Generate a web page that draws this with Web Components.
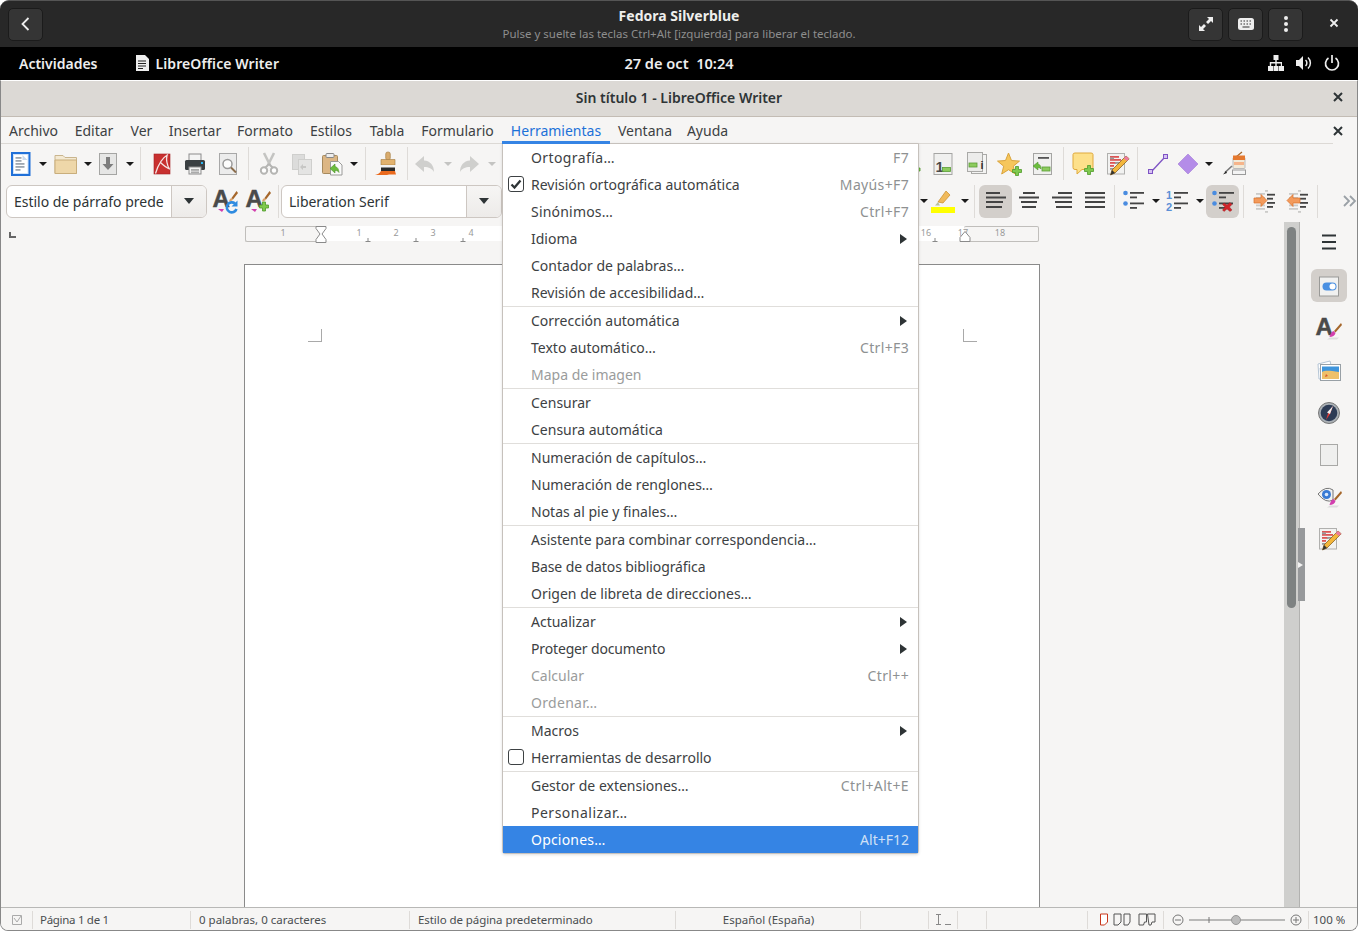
<!DOCTYPE html>
<html lang="es"><head><meta charset="utf-8"><title>Fedora Silverblue</title>
<style>
html,body{margin:0;padding:0;background:#fff}
body{width:1358px;height:931px;overflow:hidden;position:relative;font-family:"Noto Sans","Open Sans",sans-serif;font-size:14px;color:#2e3436}
</style></head><body>
<vm-header></vm-header>
<gnome-panel></gnome-panel>
<lo-window>
  <lo-titlebar>Sin título 1 - LibreOffice Writer</lo-titlebar>
  <lo-menubar>
    <lo-mi w="65">Archivo</lo-mi><lo-mi w="56">Editar</lo-mi><lo-mi w="39">Ver</lo-mi><lo-mi w="68">Insertar</lo-mi><lo-mi w="72">Formato</lo-mi><lo-mi w="60">Estilos</lo-mi><lo-mi w="52">Tabla</lo-mi><lo-mi w="89">Formulario</lo-mi><lo-mi w="108" open>Herramientas</lo-mi><lo-mi w="70">Ventana</lo-mi><lo-mi w="55">Ayuda</lo-mi>
  </lo-menubar>
  <lo-toolbar h="39" pad="4.5">
    <lo-tool i="doc"></lo-tool><lo-drop></lo-drop><lo-tool i="folder" style="margin-left:1px"></lo-tool><lo-drop></lo-drop><lo-tool i="save" style="margin-left:-2px"></lo-tool><lo-drop></lo-drop><lo-sep w="10"></lo-sep>
    <lo-tool i="pdf"></lo-tool><lo-tool i="print"></lo-tool><lo-tool i="preview"></lo-tool><lo-sep w="8"></lo-sep>
    <lo-tool i="cut"></lo-tool><lo-tool i="copy"></lo-tool><lo-tool i="paste" style="margin-left:-3px"></lo-tool><lo-drop></lo-drop><lo-sep w="12"></lo-sep>
    <lo-tool i="brush"></lo-tool><lo-sep w="5"></lo-sep>
    <lo-tool i="undo"></lo-tool><lo-drop dim></lo-drop><lo-tool i="redo"></lo-tool><lo-drop dim></lo-drop>
    <lo-gap w="397"></lo-gap>
    <lo-tool i="hdr"></lo-tool><lo-tool i="one"></lo-tool><lo-tool i="info"></lo-tool><lo-tool i="star"></lo-tool><lo-tool i="xref"></lo-tool><lo-sep w="7"></lo-sep>
    <lo-tool i="note" w="34"></lo-tool><lo-tool i="track"></lo-tool><lo-sep w="8"></lo-sep>
    <lo-tool i="line"></lo-tool><lo-tool i="diamond" w="29"></lo-tool><lo-drop></lo-drop><lo-tool i="bucket" w="37" style="margin-left:2px"></lo-tool>
  </lo-toolbar>
  <lo-toolbar h="39" pad="6" style="padding-bottom:3px;box-sizing:border-box">
    <lo-combo w="201" arrow="35">Estilo de párrafo prede</lo-combo>
    <lo-tool i="styleup" style="margin-left:2px"></lo-tool><lo-tool i="stylenew"></lo-tool><lo-sep w="6"></lo-sep>
    <lo-combo w="221" arrow="35">Liberation Serif</lo-combo>
    <lo-gap w="417"></lo-gap>
    <lo-drop w="10"></lo-drop><lo-tool i="hl" style="margin-left:-3px"></lo-tool><lo-drop></lo-drop><lo-sep w="9"></lo-sep>
    <lo-tool i="al" active></lo-tool><lo-tool i="ac"></lo-tool><lo-tool i="ar"></lo-tool><lo-tool i="aj"></lo-tool><lo-sep w="6"></lo-sep>
    <lo-tool i="bul"></lo-tool><lo-drop></lo-drop><lo-tool i="num"></lo-tool><lo-drop></lo-drop><lo-tool i="nolist" active style="margin-left:1px"></lo-tool><lo-sep w="9"></lo-sep>
    <lo-tool i="indent"></lo-tool><lo-tool i="outdent"></lo-tool><lo-sep w="6"></lo-sep>
    <lo-tool i="more" w="29" style="margin-left:14px"></lo-tool>
  </lo-toolbar>
  <lo-workspace>
    <lo-editor>
      <lo-ruler></lo-ruler>
      <lo-page></lo-page>
    </lo-editor>
    <lo-scroll></lo-scroll>
    <lo-sidebar>
      <lo-tool i="burger" w="36" h="34"></lo-tool>
      <lo-tool i="props" w="36" h="33" active style="margin-top:10px"></lo-tool>
      <lo-tool i="sstyle" w="36" h="42" style="margin-top:6px"></lo-tool>
      <lo-tool i="gallery" w="36" h="42"></lo-tool>
      <lo-tool i="compass" w="36" h="42"></lo-tool>
      <lo-tool i="pageb" w="36" h="42"></lo-tool>
      <lo-tool i="eye" w="36" h="42"></lo-tool>
      <lo-tool i="track" w="36" h="42"></lo-tool>
    </lo-sidebar>
  </lo-workspace>
  <lo-statusbar></lo-statusbar>
</lo-window>
<lo-popup>
  <lo-item k="F7" style="letter-spacing:.4px">Ortografía…</lo-item>
  <lo-item k="Mayús+F7" check="on">Revisión ortográfica automática</lo-item>
  <lo-item k="Ctrl+F7" style="letter-spacing:.2px">Sinónimos…</lo-item>
  <lo-item sub>Idioma</lo-item>
  <lo-item>Contador de palabras…</lo-item>
  <lo-item>Revisión de accesibilidad…</lo-item>
  <hr-line></hr-line>
  <lo-item sub>Corrección automática</lo-item>
  <lo-item k="Ctrl+F3">Texto automático…</lo-item>
  <lo-item off>Mapa de imagen</lo-item>
  <hr-line></hr-line>
  <lo-item>Censurar</lo-item>
  <lo-item>Censura automática</lo-item>
  <hr-line></hr-line>
  <lo-item>Numeración de capítulos…</lo-item>
  <lo-item>Numeración de renglones…</lo-item>
  <lo-item>Notas al pie y finales…</lo-item>
  <hr-line></hr-line>
  <lo-item>Asistente para combinar correspondencia…</lo-item>
  <lo-item style="letter-spacing:-.1px">Base de datos bibliográfica</lo-item>
  <lo-item>Origen de libreta de direcciones…</lo-item>
  <hr-line></hr-line>
  <lo-item sub>Actualizar</lo-item>
  <lo-item sub style="letter-spacing:-.15px">Proteger documento</lo-item>
  <lo-item off k="Ctrl++">Calcular</lo-item>
  <lo-item off style="letter-spacing:.3px">Ordenar…</lo-item>
  <hr-line></hr-line>
  <lo-item sub>Macros</lo-item>
  <lo-item check="off">Herramientas de desarrollo</lo-item>
  <hr-line></hr-line>
  <lo-item k="Ctrl+Alt+E">Gestor de extensiones…</lo-item>
  <lo-item style="letter-spacing:.5px">Personalizar…</lo-item>
  <lo-item k="Alt+F12" hot style="letter-spacing:.2px">Opciones…</lo-item>
</lo-popup>
<script>
const A='font-family="Liberation Sans" font-weight="700"';
const bigA=`<text x="-1.500" y="18" ${A} font-size="24" fill="#4a4a4a" stroke="#4a4a4a" stroke-width=".5">A</text>`;
const lines=(a,c='#444',h=1.8)=>a.map(([x,y,w])=>`<rect x="${x}" y="${y}" width="${w}" height="${h}" fill="${c}"/>`).join('');
const plus=(x,y)=>`<path transform="translate(${x} ${y})" d="M3 0h3v3h3v3H6v3H3V6H0V3h3z" fill="#7fc94e" stroke="#4f9a2a" stroke-width=".8"/>`;
const minus=(x,y)=>`<rect x="${x}" y="${y}" width="8" height="4" fill="#8ccb5e" stroke="#5a9d36" stroke-width=".8"/>`;
const brushS=`<path d="M22.500 2l-5 7 1.500 1.500L24 4z" fill="#a5662a"/><path d="M17.500 9c-1.500.5-2 1.500-2.500 3.500 2-.2 3.500-.8 4-2z" fill="#d9a26a"/>`;
const brushL=`<path d="M24 6l-7 8 1.500 1.500L25 8z" fill="#a5662a"/><path d="M16.500 14c-2 .5-3 3-4 6 3 0 5.500-1.500 6-4z" fill="#d23fae"/><path d="M10 22.500h10l2-2H13z" fill="#ddd"/>`;
const I={
doc:`<rect x="3" y="1" width="17.500" height="22" fill="#cfe2f8" stroke="#2070d8" stroke-width="2"/><rect x="5" y="3" width="13.500" height="18" fill="#fff"/><path d="M13.500 3l5 5h-5z" fill="#c9d9ec"/>${lines([[6.500,5,6],[6.500,8,6],[6.500,11,9],[6.500,14,9],[6.500,17,5]],'#9fa7b0')}`,
folder:`<path d="M1 3.500h8l2 2h11.500v16H1z" fill="#f4e9d2" stroke="#c9b58e"/><path d="M1 8h21.500v13.500H1z" fill="#eed7a9" stroke="#c9ae7c"/>`,
save:`<rect x="3.500" y="1.500" width="17" height="21" fill="#e6e6e5" stroke="#a5a5a3"/><path d="M10 5h4v7h3.500L12 18l-5.500-6H10z" fill="#7d7d7d"/>`,
pdf:`<rect x="4" y="2" width="16" height="20" fill="#c8302f" stroke="#a52022" stroke-width=".6"/><path d="M18 2.500C12 6 8 13 5.500 21.500M10 10c3 3 6 6 10 7M17 3c-1 5 0 10 2.500 14" fill="none" stroke="#f5e3e3" stroke-width="1.300"/>`,
print:`<rect x="6" y="2" width="12" height="7" fill="#f4f4f4" stroke="#8b8b8b"/><rect x="2" y="8" width="20" height="10" rx="1.500" fill="#3a3f42"/><rect x="6" y="15" width="12" height="7" fill="#f2f2f2" stroke="#8b8b8b"/><rect x="18" y="10" width="2" height="2" fill="#2bb5f0"/>${lines([[8,17,8],[8,19.500,8]],'#aaa')}`,
preview:`<rect x="3.500" y="1.500" width="17" height="21" fill="#ececec" stroke="#a8a8a8"/><circle cx="11.500" cy="12" r="4.500" fill="#fdfdfd" stroke="#9a9a9a" stroke-width="1.500"/><path d="M15 15.500l5 5" stroke="#8b6d4c" stroke-width="2"/>`,
cut:`<path d="M7 1l6 12M17 1l-6 12" stroke="#c4c4c2" stroke-width="2.600" fill="none"/><circle cx="7" cy="18.500" r="3.200" fill="#fff" stroke="#b5b5b3" stroke-width="2"/><circle cx="17" cy="18.500" r="3.200" fill="#fff" stroke="#b5b5b3" stroke-width="2"/><path d="M12 12l-4 4M12 12l4 4" stroke="#b5b5b3" stroke-width="2"/>`,
copy:`<rect x="2.500" y="2.500" width="12" height="15" fill="#dcdcdb" stroke="#cfcfcd"/><rect x="8.500" y="7.500" width="13" height="15" fill="#e4e4e3" stroke="#cfcfcd"/><path d="M13 12l-3 3 3 3v-2h3v-2h-3z" fill="#c7c7c5"/>`,
paste:`<rect x="2.500" y="3.500" width="15" height="18" rx="1" fill="#dcb684" stroke="#a68a5e"/><rect x="6" y="1.500" width="8" height="4" rx="1" fill="#eee" stroke="#888"/><path d="M10.500 9.500h8l3.500 3.500v10H10.500z" fill="#fafafa" stroke="#9a9a98"/><path d="M15 12l-5 4.500 5 4.500v-2.500c2 0 3 .5 4 2-.3-3.500-1.500-5.500-4-6z" fill="#6cbd3e" stroke="#4b8f28" stroke-width=".6"/>`,
brush:`<rect x="9.700" y="0" width="4.600" height="8" rx="2" fill="#d9ab6c" stroke="#a27b40" stroke-width=".6"/><path d="M5 7.500h14V13H5z" fill="#e2b26e" stroke="#a27b40" stroke-width=".6"/><rect x="5" y="13" width="14" height="3" fill="#f2f2f2"/><rect x="5" y="15.500" width="14" height="3.500" fill="#2a2a2a"/><path d="M5 19h14l1 3.500H13l-2 .5H-1c2-.8 5-1.500 6-4z" fill="#ea6a1e"/>`,
undo:`<path d="M11 4L2 12l9 8v-5c5 0 8 1.500 10 5 0-6.500-3.500-11-10-11.500z" fill="#cfcfcd" transform="translate(-1 0)"/>`,
redo:`<path d="M13 4l9 8-9 8v-5C8 15 5 16.500 3 20 3 13.500 6.500 9 13 8.500z" fill="#cfcfcd" transform="translate(-1 0)"/>`,
hdr:`<g transform="translate(-14 0)"><circle cx="28" cy="7" r="3" fill="none" stroke="#bbb"/>${plus(26,13)}</g>`,
one:`<g transform="translate(-1.500 0)"><rect x="3.500" y="1.500" width="18" height="21" fill="#f0f0ef" stroke="#a5a5a3"/><text x="5" y="20" ${A} font-size="15" fill="#4a4a4a">1</text>${minus(12,15.500)}</g>`,
info:`<g transform="translate(-1 0)"><rect x="7.500" y="2.500" width="15" height="19" fill="#f4f4f3" stroke="#a9a9a7"/><rect x="3.500" y=".5" width="15" height="19" fill="#ececeb" stroke="#a9a9a7"/>${minus(5,11)}<text x="16.500" y="17" ${A} font-size="11" fill="#333">i</text></g>`,
star:`<path d="M10.500 1l3 7.500 8 .6-6.200 5.100 2 7.800-6.800-4.300L3.700 22l2-7.800L-.5 9.100l8-.6z" fill="#f6c65b" stroke="#d9a33c"/>${plus(14.500,14.500)}`,
xref:`<g transform="translate(-1 0)"><rect x="3.500" y="1.500" width="18" height="21" fill="#f0f0ef" stroke="#a5a5a3"/>${lines([[8,5,11]],'#555')}${minus(12,15)}<path d="M8 10l-5 4 5 4v-2.500c1 0 2 .5 3 1.500 0-3-1-4.500-3-5z" fill="#6cbd3e" stroke="#4b8f28" stroke-width=".5"/></g>`,
note:`<g transform="translate(-1 0)"><path d="M2 2.500Q2 1 4 1h16q2 0 2 1.500v13q0 2-2 2H11L6 22v-4.500H4q-2 0-2-2z" fill="#fde08a" stroke="#e0a93c"/>${plus(13.500,13.500)}</g>`,
track:`<rect x="2.500" y="1.500" width="17" height="20.500" fill="#f2f2f1" stroke="#b0b0ae"/>${lines([[5,4,9],[5,7,11],[5,10,6],[5,13,4]],'#d55')}${lines([[5,5.500,4],[10,10,7],[5,16,5]],'#999')}<path d="M21 4l3.200 2.800L10 21 5.500 23 7 18z" fill="#f3b63c" stroke="#7a5518" stroke-width=".7"/><path d="M21 4l3.200 2.800-2.400 2.300-3.200-2.800z" fill="#ec7aa0"/><path d="M5.500 23L7 18l3 3z" fill="#333"/>`,
line:`<path d="M5 20L19 5" stroke="#7d52c4" stroke-width="1.300"/><rect x="2.500" y="17.500" width="4" height="4" fill="#d6c2f2" stroke="#7d52c4"/><rect x="17.500" y="2.500" width="4" height="4" fill="#d6c2f2" stroke="#7d52c4"/>`,
diamond:`<path d="M11 2l10 10-10 10L1 12z" fill="#b48ce8" stroke="#a27ad6" stroke-width=".6"/>`,
bucket:`<path d="M19 0l-6 5" stroke="#a5662a" stroke-width="1.200"/><rect x="10" y="5.500" width="12" height="11" rx="1" fill="#f2ead9" stroke="#bbb"/><path d="M10 3.500h12V8H10z" fill="#e5792f"/><rect x="11" y="10" width="10" height="3" fill="#f6b48a"/><rect x="9.500" y="18" width="13" height="4.500" fill="#f4f4f4" stroke="#9a9a9a"/><path d="M9 14L2 20.500" stroke="#777" stroke-width="1.600"/><path d="M3 19l-3 3.500 4-1.500z" fill="#222"/>`,
styleup:`${bigA}${brushS}<path d="M21 14.500a5 5 0 1 0 1.500 5.500" fill="none" stroke="#2f8be0" stroke-width="2.600"/><path d="M23.500 11.500v6h-6z" fill="#2f8be0"/><path d="M4 20l6 0-2 3z" fill="#d23fae"/>`,
stylenew:`${bigA}${brushS}<path d="M4 20l6 0-2 3z" fill="#d23fae"/>${plus(12.500,13)}`,
hl:`<path d="M15 2l4 4-7 8-5-1z" fill="#f0ba5c" stroke="#c98b28" stroke-width=".7"/><path d="M7 13l-3 3.500h5z" fill="#b8c2a0"/><rect x="0" y="18" width="24" height="6" fill="#ffff00"/>`,
al:lines([[2,3,14],[2,7.500,20],[2,12,17],[2,17,16]],'#444',2),
ac:lines([[6,3,12],[2,7.500,20],[4,12,16],[5,17,14]],'#444',2),
ar:lines([[8,3,14],[2,7.500,20],[5,12,17],[6,17,16]],'#444',2),
aj:lines([[2,3,20],[2,7.500,20],[2,12,20],[2,17,20]],'#444',2),
bul:`<circle cx="3.500" cy="4" r="2.300" fill="#4a8ce0"/><circle cx="3.500" cy="14.500" r="2.300" fill="#4a8ce0"/>${lines([[8,3,14],[8,7.500,7],[8,13.500,14],[8,18,7]],'#444')}`,
num:`<text x="0" y="10" ${A} font-size="11" fill="#5a8fd6">1</text><text x="0" y="22" ${A} font-size="11" fill="#5a8fd6">2</text>${lines([[8,3,14],[8,7.500,7],[8,13.500,14],[8,18,7]],'#444')}`,
nolist:`<circle cx="3.500" cy="4" r="2.300" fill="#4a8ce0"/><circle cx="3.500" cy="14.500" r="2.300" fill="#4a8ce0"/>${lines([[8,3,15],[8,7.500,7],[8,13.500,14],[8,18,7]],'#444')}<path d="M13 14l3 2 3-2.500 2 2-2.500 2.500 2.500 3-2 1.500-3-2.500-3 2.500-1.500-1.500 2.500-3-2.500-2.500z" fill="#d0242a" stroke="#9a1a1e" stroke-width=".4"/>`,
indent:`${lines([[12,1,3],[3,4,9],[3,8,9],[3,15.500,9],[3,19,9],[12,22,3]],'#cbcbc9')}${lines([[14,4.800,8],[14,8.800,6],[14,13,8],[14,17,6]],'#444')}<path d="M1 9h7V5.500l6 6-6 6V14H1z" fill="#f39a5b" stroke="#d9702a" stroke-width=".7"/>`,
outdent:`${lines([[12,1,3],[3,4,9],[3,8,9],[3,15.500,9],[3,19,9],[12,22,3]],'#cbcbc9')}${lines([[14,4.800,8],[14,8.800,6],[14,13,8],[14,17,6]],'#444')}<path d="M14 9H7V5.500l-6 6 6 6V14h7z" fill="#f39a5b" stroke="#d9702a" stroke-width=".7"/>`,
more:`<path d="M7 7l5 5-5 5M13 7l5 5-5 5" fill="none" stroke="#9aa0a6" stroke-width="1.800"/>`,
burger:`<path d="M5 5.500h14M5 12h14M5 18.500h14" stroke="#2e3436" stroke-width="2"/>`,
props:`<rect x="2.500" y="3" width="19" height="19" fill="#f1f1f0" stroke="#9a9a98"/><rect x="5.500" y="8.500" width="14" height="8" rx="4" fill="#4a90e2"/><circle cx="15.500" cy="12.500" r="3" fill="#fff"/>`,
sstyle:`${bigA}${brushL}`,
gallery:`<path d="M1 5l12-3 1 4-11 3 1 11H2z" fill="#fff" stroke="#b5c5d5"/><rect x="3.500" y="5.500" width="20" height="16" fill="#fff" stroke="#98a0a6"/><rect x="5" y="7.500" width="17" height="6" fill="#3f95dc"/><path d="M5 13c4-2 8-1 17 0v7H5z" fill="#eec06a"/><path d="M9 15l2 2-3 1z" fill="#d95a2a"/>`,
compass:`<circle cx="12" cy="12" r="10.500" fill="#aab0b5" stroke="#777"/><circle cx="12" cy="12" r="8.300" fill="#2d3b55"/><path d="M16 5l-3 8-4 6 2.500-8z" fill="#e53935"/><path d="M16 5l-3 8-3-1.500z" fill="#eee"/>`,
pageb:`<rect x="3.500" y="1.500" width="17" height="21" fill="#efefee" stroke="#a8a8a6"/>`,
eye:`<path d="M1 9q8-9 15-4v10q-7 4-15-6z" fill="#f2f2f2" stroke="#777"/><circle cx="9.500" cy="9.500" r="4.500" fill="#3a7bd5"/><circle cx="9.500" cy="9.500" r="1.800" fill="#dbe9fa"/>${brushL}`,
};
function def(name,css,html,extra={}){
  customElements.define(name,class extends HTMLElement{
    constructor(){super();this.attachShadow({mode:'open'}).innerHTML=`<style>${css}</style>${typeof html==='function'?'':html}`;}
    connectedCallback(){if(typeof html==='function'&&!this._d){this._d=1;this.shadowRoot.innerHTML+=html(this);}if(extra.init)extra.init(this);}
  });
}
def('vm-header',`
:host{display:grid;grid-template-columns:1fr auto 1fr;align-items:center;height:47px;box-sizing:border-box;background:#282828;padding:0 8px;border-radius:9px 9px 0 0;border-top:1px solid #555;color:#eee;position:relative}
.b{width:35px;height:33px;box-sizing:border-box;border:1px solid #1b1b1b;border-radius:5px;background:#353535;display:flex;align-items:center;justify-content:center}
.c{text-align:center;padding-top:1px}
.t{font-weight:700;font-size:14px;color:#eeeeec;line-height:18px}.s{font-size:11.500px;color:#8e8e8e;line-height:18px}
.r{display:flex;gap:5px;justify-content:flex-end;margin-right:47px}
.x{position:absolute;right:18px;top:16px;width:12px;height:12px}
`,`<div class="b"><svg width="16" height="16" viewBox="0 0 16 16"><path d="M10.500 2L4.500 8l6 6" fill="none" stroke="#eee" stroke-width="1.800"/></svg></div>
<div class="c"><div class="t">Fedora Silverblue</div><div class="s">Pulse y suelte las teclas Ctrl+Alt [izquierda] para liberar el teclado.</div></div>
<div class="r"><div class="b"><svg width="18" height="18" viewBox="0 0 18 18"><path d="M10 2h6v6l-2-2-3 3-2-2 3-3zM8 16H2v-6l2 2 3-3 2 2-3 3z" fill="#eee"/></svg></div>
<div class="b"><svg width="18" height="14" viewBox="0 0 18 14"><rect x="1" y="1" width="16" height="12" rx="2.500" fill="#eee"/><path d="M3.500 4h1.500M6.500 4h1.500M9.500 4h1.500M12.500 4h1.500M3.500 7h1.500M6.500 7h1.500M9.500 7h1.500M12.500 7h1.500M5.500 10h7" stroke="#333" stroke-width="1.200"/></svg></div>
<div class="b"><svg width="6" height="18" viewBox="0 0 6 18"><circle cx="3" cy="3" r="2" fill="#eee"/><circle cx="3" cy="9" r="2" fill="#eee"/><circle cx="3" cy="15" r="2" fill="#eee"/></svg></div></div>
<svg class="x" viewBox="0 0 12 12"><path d="M2.500 2.500l7 7M9.500 2.500l-7 7" stroke="#eee" stroke-width="1.800"/></svg>`);
def('gnome-panel',`
:host{display:grid;grid-template-columns:1fr auto 1fr;align-items:center;height:33px;background:#000;color:#eee;font-weight:600;font-size:14px;padding:0 18px 1px 19px;box-sizing:border-box}
.l,.r{display:flex;align-items:center}.r{justify-content:flex-end;gap:12px}
.a{margin-left:37px;margin-right:6px;display:flex}
.n{letter-spacing:.1px}
.d{white-space:pre;font-size:14.600px;margin-left:-1px}
`,`<div class="l"><span>Actividades</span><span class="a"><svg width="15" height="16" viewBox="0 0 15 16"><path d="M1 0h9l4 4v12H1z" fill="#eee"/><path d="M3 6h8M3 8.500h8M3 11h8M3 13.500h5" stroke="#222" stroke-width="1"/></svg></span><span class="n">LibreOffice Writer</span></div>
<div class="d">27 de oct  10:24</div>
<div class="r"><svg width="16" height="16" viewBox="0 0 16 16"><path d="M5.500 0h5v5h-1.800v2H14v4h2v5h-5v-5h1.800V8.500H8.700V11H10.500v5h-5v-5h1.800V8.500H3.200V11H5v5H0v-5h1.800V7h5.500V5H5.500z" fill="#eee"/></svg>
<svg width="16" height="16" viewBox="0 0 16 16"><path d="M0 5h3l4-4v14l-4-4H0z" fill="#eee"/><path d="M9.500 5a4 4 0 0 1 0 6M12 2.500a7.500 7.500 0 0 1 0 11" fill="none" stroke="#eee" stroke-width="1.500"/></svg>
<svg width="16" height="16" viewBox="0 0 16 16"><path d="M4.500 3a6.500 6.500 0 1 0 7 0M8 0v8" fill="none" stroke="#eee" stroke-width="1.700"/></svg></div>`);
def('lo-window',`:host{display:flex;flex-direction:column;height:851px;background:#f6f5f4;box-sizing:border-box;border-top:1px solid #fff;border-left:1px solid #888;border-right:1px solid #888;border-bottom:1px solid #888;border-radius:0 0 8px 8px;overflow:hidden}`,`<slot></slot>`);
def('lo-titlebar',`:host{display:flex;align-items:center;justify-content:center;height:36px;flex:none;box-sizing:border-box;background:#dcd9d5;border-bottom:1px solid #c3bcb4;font-weight:600;font-size:14px;color:#2e3436;position:relative;padding-bottom:2px}
svg{position:absolute;right:13px;top:10px}`,`<slot></slot><svg width="12" height="12" viewBox="0 0 12 12"><path d="M2 2l8 8M10 2l-8 8" stroke="#2e3436" stroke-width="2"/></svg>`);
def('lo-menubar',`:host{display:flex;height:27px;flex:none;position:relative;box-sizing:border-box}
svg{position:absolute;right:13px;top:8px}
.ln{position:absolute;left:0;right:24px;bottom:0;height:1px;background:#dcd9d5}`,`<div class="ln"></div><slot></slot><svg width="12" height="12" viewBox="0 0 12 12"><path d="M2 2l8 8M10 2l-8 8" stroke="#2e3436" stroke-width="2"/></svg>`);
def('lo-mi',`:host{display:flex;align-items:center;justify-content:center;padding-bottom:1px;box-sizing:border-box;height:27px;color:#3d4143;position:relative;z-index:1;flex:none}
:host([open]){color:#1c71d8;box-shadow:inset 0 -3px 0 #3584e4}`,`<slot></slot>`,{init(e){e.style.width=e.getAttribute('w')+'px';}});
def('lo-toolbar',`:host{display:flex;align-items:center;flex:none}`,`<slot></slot>`,{init(e){e.style.height=e.getAttribute('h')+'px';e.style.paddingLeft=(parseFloat(e.getAttribute('pad'))-1)+'px';}});
def('lo-tool',`:host{display:flex;align-items:center;justify-content:center;flex:none;width:33px;height:33px;border-radius:6px;box-sizing:border-box}
:host([active]){background:#d3cfcb}svg{display:block;overflow:visible}`,el=>`<svg width="24" height="24" viewBox="0 0 24 24">${I[el.getAttribute('i')]||''}</svg>`,{init(e){if(e.getAttribute('w'))e.style.width=e.getAttribute('w')+'px';if(e.getAttribute('h'))e.style.height=e.getAttribute('h')+'px';}});
def('lo-drop',`:host{display:flex;align-items:center;justify-content:center;flex:none;width:11px;height:33px}
i{width:0;height:0;border:4px solid transparent;border-top:4px solid #1a1a1a;border-bottom:0;display:block;border-left-width:4.500px;border-right-width:4.500px}
:host([dim]) i{border-top-color:#c4c4c2}`,`<i></i>`,{init(e){if(e.getAttribute('w'))e.style.width=e.getAttribute('w')+'px';}});
def('lo-sep',`:host{display:flex;justify-content:center;flex:none;height:33px}i{display:block;width:1px;background:#dedbd8;height:100%}`,`<i></i>`,{init(e){e.style.width=e.getAttribute('w')+'px';}});
def('lo-gap',`:host{display:block;flex:none}`,``,{init(e){e.style.width=e.getAttribute('w')+'px';}});
def('lo-combo',`:host{display:flex;flex:none;height:33px;box-sizing:border-box;background:#fff;border:1px solid #cdc7c2;border-radius:6px;color:#2e3436;overflow:hidden}
.t{flex:1;display:flex;align-items:center;padding-left:7px;white-space:nowrap;overflow:hidden;letter-spacing:-.02px}
.a{flex:none;width:35px;background:linear-gradient(#f6f5f4,#edebe9);border-left:1px solid #cdc7c2;display:flex;align-items:center;justify-content:center;box-sizing:border-box}
i{width:0;height:0;border:5.500px solid transparent;border-top:6px solid #2e3436;border-bottom:0}`,`<div class="t"><slot></slot></div><div class="a"><i></i></div>`,{init(e){e.style.width=e.getAttribute('w')+'px';}});
def('lo-workspace',`:host{display:flex;flex:1;min-height:0;position:relative}`,`<slot></slot>`);
def('lo-editor',`:host{display:flex;flex-direction:column;width:1283px;flex:none;position:relative;overflow:hidden}`,`<slot></slot>`);
def('lo-ruler',`:host{display:block;flex:none;margin:4px 0 0 244px;width:794px;height:16px;position:relative;color:#9a9a9a;font-size:9px}
.z{display:flex;height:100%;box-sizing:border-box}
.m{box-sizing:border-box;border:1px solid #c0bebb;border-radius:2px;width:76px;height:16px}
.m.r{width:75px;border-left:0}.m.l{border-right:0}
.w{background:#fff;flex:1;height:15px}
.n{position:absolute;top:0;line-height:14px;transform:translateX(-50%)}
.k{position:absolute;top:12px;width:5px;height:3px;border-bottom:1px solid #888;transform:translateX(-50%)}
.k:before{content:"";display:block;width:1px;height:3px;background:#888;margin-left:2px}
.h{position:absolute;transform:translateX(-50%);top:0}
.tab{position:absolute;left:-236px;top:6px;width:5px;height:4px;border-left:2px solid #666;border-bottom:2px solid #666}
`,el=>{
 const pos=[[38,'1'],[114,'1'],[151,'2'],[188,'3'],[226,'4'],[681,'16'],[718,'17'],[755,'18']];
 return `<i class="tab"></i><div class="z"><div class="m l"></div><div class="w"></div><div class="m r"></div></div>`+
 pos.map(([x,t])=>`<span class="n" style="left:${x}px">${t}</span>`).join('')+
 [123,171,218,690].map(x=>`<span class="k" style="left:${x}px"></span>`).join('')+
 `<svg class="h" style="left:76px" width="12" height="17" viewBox="0 0 12 17"><path d="M1 .5h10v2L7 8l4 5.500v3H1v-3L5 8 1 2.500z" fill="#fff" stroke="#8a8a8a"/></svg><svg class="h" style="left:720px;top:5px" width="12" height="11" viewBox="0 0 12 11"><path d="M6 .5l5 6v4H1v-4z" fill="#fff" stroke="#8a8a8a"/></svg>`});
def('lo-page',`:host{display:flex;justify-content:space-between;align-items:flex-start;flex:1;margin:22px 0 0 243px;width:796px;box-sizing:border-box;background:#fff;border:1px solid #8a8a8a;border-bottom:0;padding:64px 62px 0 63px}
i{display:block;width:13px;height:12px;border-bottom:1px solid #a9a9a9}
.a{border-right:1px solid #a9a9a9}.b{border-left:1px solid #a9a9a9}`,`<i class="a"></i><i class="b"></i>`);
def('lo-scroll',`:host{display:block;flex:none;width:16px;box-sizing:border-box;background:#cfcfcd;border-right:1px solid #b2b2b0;position:relative}
i{position:absolute;left:3px;top:5px;width:9px;height:381px;border-radius:5px;background:#7e8282}`,`<i></i>`);
def('lo-sidebar',`:host{display:flex;flex-direction:column;align-items:center;flex:none;width:57px;padding:3px 0 0 1px;box-sizing:border-box;position:relative}
.h{position:absolute;left:-2px;top:306px;width:7px;height:73px;background:#97999b;display:flex;align-items:center}
.h i{width:0;height:0;border:3.500px solid transparent;border-left:5px solid #f2f2f2;border-right:0}`,`<div class="h"><i></i></div><slot></slot>`);
def('lo-statusbar',`:host{display:flex;align-items:center;flex:none;height:23px;box-sizing:border-box;border-top:1px solid #b8b8b6;font-size:11.500px;color:#4a4e50;background:#f6f5f4;padding-top:1px;white-space:nowrap}
.c{box-sizing:border-box;height:18px;display:flex;align-items:center;border-right:1px solid #dedbd8;padding-left:8px;flex:none;overflow:hidden}
svg{display:block}`,`<div class="c" style="width:32px;justify-content:center;padding:0"><svg width="12" height="12" viewBox="0 0 12 12"><path d="M1.500 1.500h9v9h-9z" fill="none" stroke="#aaa"/><path d="M3 4l3 4 4-6" fill="none" stroke="#aaa"/></svg></div>
<div class="c" style="width:158px;padding-left:7px;letter-spacing:-.3px">Página 1 de 1</div><div class="c" style="width:219px">0 palabras, 0 caracteres</div><div class="c" style="width:266px;letter-spacing:-.07px">Estilo de página predeterminado</div>
<div class="c" style="width:185px;justify-content:center;padding:0 0 0 1px;">Español (España)</div><div class="c" style="width:68px"></div><div class="c" style="width:29px;padding-left:6px"><svg width="18" height="13" viewBox="0 0 18 13"><path d="M1 1.500h5M1 11.500h5M3.500 1.500v10" stroke="#888"/><path d="M10 11.500h6" stroke="#888"/></svg></div><div class="c" style="width:29px"></div>
<div class="c" style="width:101px"></div>
<div class="c" style="width:76px;padding:0 0 0 12px"><svg width="58" height="13" viewBox="0 0 58 13"><path d="M.5 1h7v8l-3 3h-4z" fill="#fff" stroke="#c8361a"/><path d="M14 1h7v8l-3 3h-4zM24 1h6v8l-2 3h-4z" fill="none" stroke="#555"/><path d="M39 1h7.500v8h-2l-1 3h-4.500zM47.500 1H55v8h-3l-1 3h-2z" fill="none" stroke="#555"/></svg></div>
<div class="c" style="width:145px;padding:0 0 0 8px"><svg width="130" height="14" viewBox="0 0 130 14"><circle cx="6" cy="7" r="5" fill="none" stroke="#777"/><path d="M3 7h6" stroke="#777"/><path d="M17 7h96" stroke="#a5a5a5" stroke-width="1.500"/><path d="M37 4v6" stroke="#777"/><circle cx="64" cy="7" r="4.500" fill="#bbb" stroke="#999"/><circle cx="124" cy="7" r="5" fill="none" stroke="#777"/><path d="M121 7h6M124 4v6" stroke="#777"/></svg></div>
<div class="c" style="border:0;padding-left:4px">100 %</div>`);
def('lo-popup',`:host{position:absolute;left:502px;top:143px;width:417px;box-sizing:border-box;background:#fff;border:1px solid #c6c1bc;border-radius:0 0 3px 3px;display:block;box-shadow:0 1px 3px rgba(0,0,0,.12)}`,`<slot></slot>`);
def('hr-line',`:host{display:block;height:1px;background:#e0dedb}`,``);
def('lo-item',`:host{display:flex;align-items:center;height:27px;box-sizing:border-box;padding:0 9px 0 28px;color:#3d4143;position:relative;white-space:nowrap}
:host([off]){color:#9a9c9c}.k{margin-left:auto;color:#8e9192;letter-spacing:.35px}
:host([hot]){background:#3584e4;color:#fff}:host([hot]) .k{color:#cfe0f6;letter-spacing:0}
.s{margin-left:auto;width:0;height:0;border:5.500px solid transparent;border-left:7px solid #2e3436;border-right:0;margin-right:2px}
.cb{position:absolute;left:5px;top:5px;width:16px;height:16px;box-sizing:border-box;border:1.500px solid #3d4143;border-radius:3px;display:flex;align-items:center;justify-content:center;background:#fff}
`,el=>{
 let h='<span><slot></slot></span>';
 if(el.hasAttribute('k'))h+=`<span class="k">${el.getAttribute('k')}</span>`;
 if(el.hasAttribute('sub'))h+='<span class="s"></span>';
 const c=el.getAttribute('check');
 if(c)h+=`<span class="cb">${c==='on'?'<svg width="12" height="12" viewBox="0 0 12 12"><path d="M1.500 6.500l3 3 6-7" fill="none" stroke="#2e3436" stroke-width="2.300"/></svg>':''}</span>`;
 return h;
});
</script>
</body></html>
